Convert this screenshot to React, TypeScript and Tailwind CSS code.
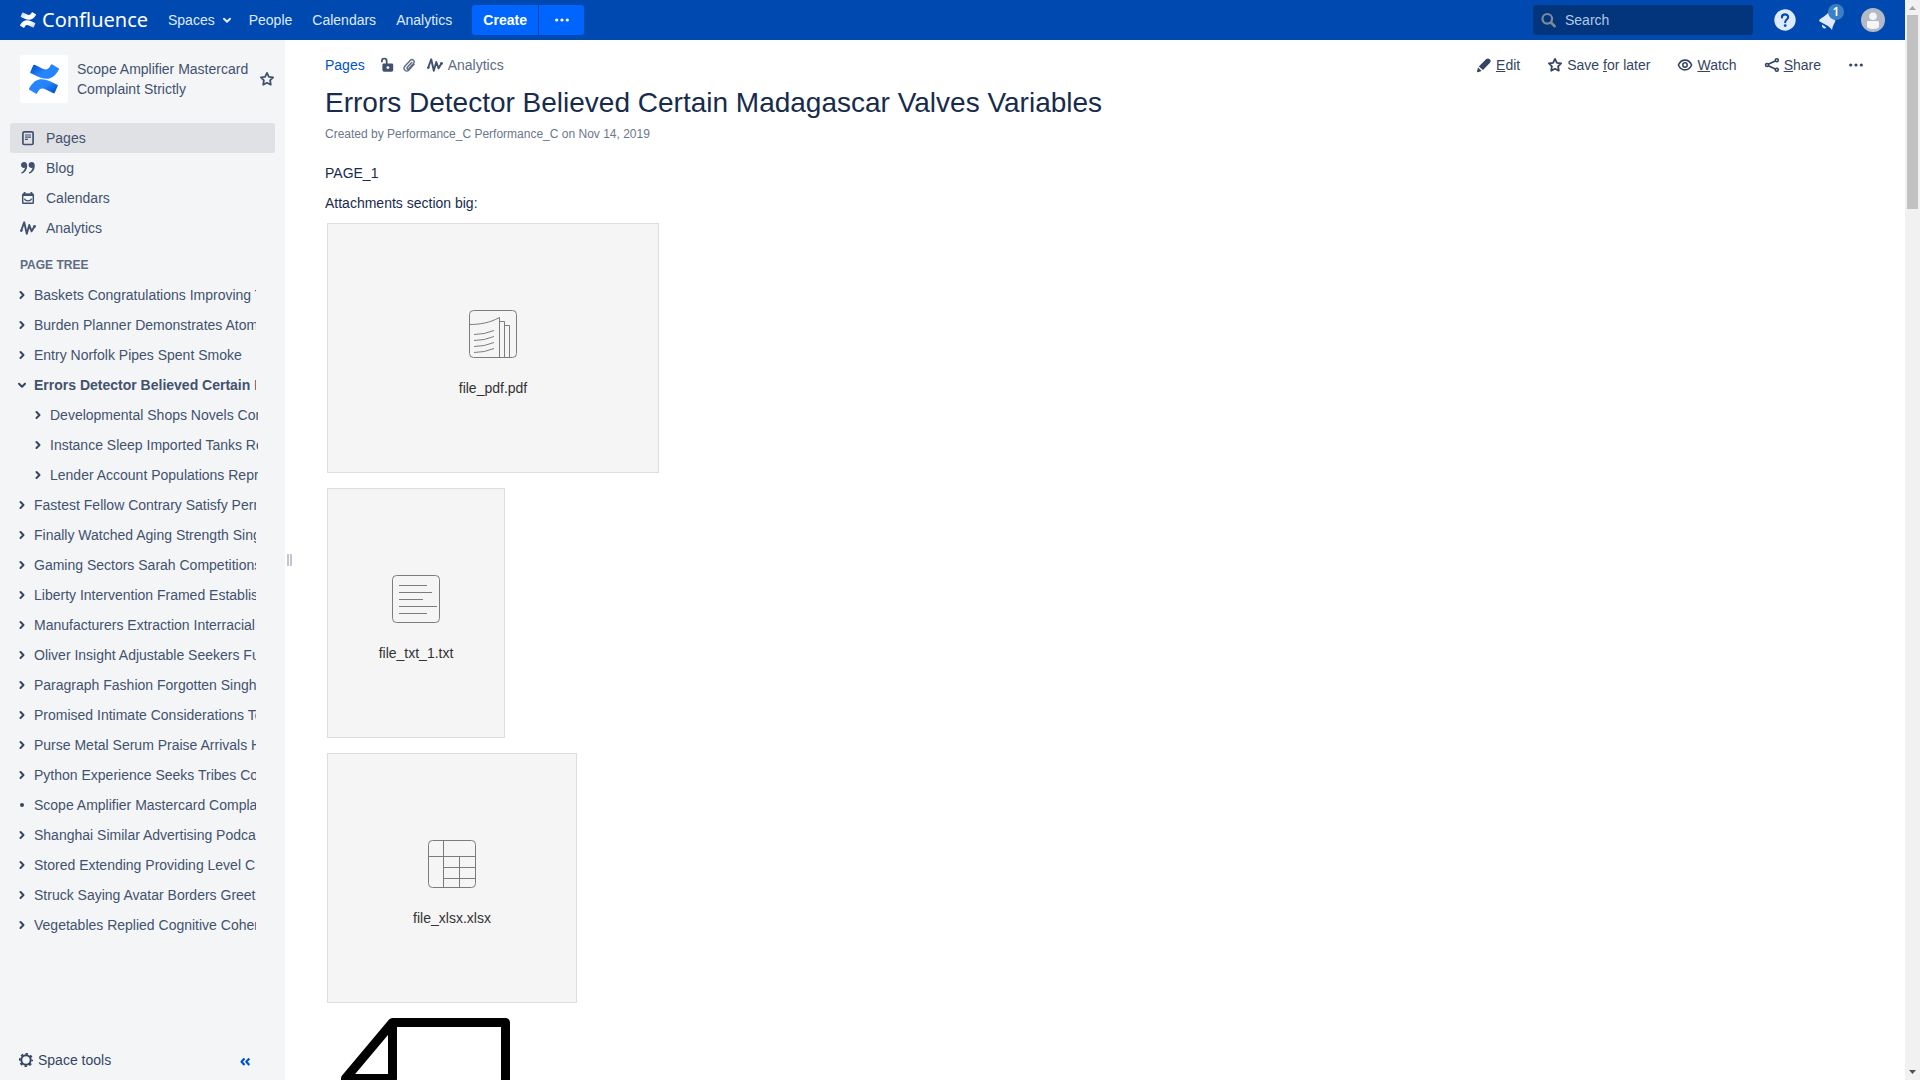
import type { ReactNode } from "react";

type IconProps = { className?: string };

function Svg({ children, className = "size-4" }: { children: ReactNode; className?: string }) {
  return (
    <svg viewBox="0 0 16 16" className={`${className} shrink-0`} fill="none" stroke="currentColor" aria-hidden="true">
      {children}
    </svg>
  );
}

const MARK_BOTTOM =
  "M.87 18.257c-.248.382-.53.875-.763 1.245a.764.764 0 0 0 .255 1.04l4.965 3.054a.764.764 0 0 0 1.058-.26c.199-.332.454-.763.733-1.221 1.967-3.247 3.945-2.853 7.508-1.146l4.957 2.337a.764.764 0 0 0 1.028-.382l2.364-5.346a.764.764 0 0 0-.382-1 599.851 599.851 0 0 1-4.965-2.361C10.911 10.97 5.224 11.185.87 18.257z";
const MARK_TOP =
  "M23.131 5.743c.249-.405.531-.875.764-1.25a.764.764 0 0 0-.256-1.034L18.675.404a.764.764 0 0 0-1.058.26c-.195.335-.451.763-.734 1.225-1.966 3.246-3.945 2.85-7.508 1.146L4.437.694a.764.764 0 0 0-1.027.382L1.046 6.422a.764.764 0 0 0 .382 1c1.039.49 3.105 1.467 4.965 2.361 6.698 3.246 12.392 3.029 16.738-4.04z";

function ConfluenceMark({ id, dark, light, className }: { id: string; dark: string; light: string; className: string }) {
  return (
    <svg viewBox="0 0 24 24" className={`${className} shrink-0`} aria-hidden="true">
      <defs>
        <linearGradient id={`${id}-b`} x1="1" y1="1" x2="0.2" y2="0.4">
          <stop offset="0.1" stopColor={dark} />
          <stop offset="0.7" stopColor={light} />
        </linearGradient>
        <linearGradient id={`${id}-t`} x1="0" y1="0" x2="0.8" y2="0.6">
          <stop offset="0.1" stopColor={dark} />
          <stop offset="0.7" stopColor={light} />
        </linearGradient>
      </defs>
      <path d={MARK_BOTTOM} fill={`url(#${id}-b)`} />
      <path d={MARK_TOP} fill={`url(#${id}-t)`} />
    </svg>
  );
}

function StarIcon({ className }: IconProps) {
  return (
    <Svg className={className}>
      <path d="M8 1.9 9.9 5.8l4.2.6-3 3 .7 4.3L8 11.7l-3.8 2 .7-4.3-3-3 4.2-.6z" strokeWidth="1.8" strokeLinejoin="round" />
    </Svg>
  );
}

function PageIcon() {
  return (
    <Svg>
      <rect x="2.9" y="1.9" width="10.2" height="12.6" rx="1.2" strokeWidth="1.7" />
      <path d="M5 5h6M5 7.2h6M5 9.4h3" strokeWidth="1.2" />
    </Svg>
  );
}

function QuoteIcon() {
  return (
    <Svg>
      <g fill="currentColor" stroke="none">
        <path d="M4.2 2C2.300 2 1 3.300 1 5s1.200 2.900 2.900 2.900c.4 0 .7 0 1-.1-.3 2.100-1.700 3.700-3.700 4.800l.5 1.200C5.200 12.600 7.200 9.700 7.200 6 7.200 3.500 6.100 2 4.200 2z" />
        <path d="M11.800 2C9.900 2 8.600 3.300 8.600 5s1.200 2.900 2.900 2.900c.4 0 .7 0 1-.1-.3 2.100-1.700 3.700-3.700 4.800l.5 1.200c3.500-1.200 5.500-4.100 5.500-7.800 0-2.500-1.100-4-3-4z" />
      </g>
    </Svg>
  );
}

function CalendarIcon() {
  return (
    <Svg>
      <rect x="2.700" y="4.200" width="10.600" height="9" rx="0.8" strokeWidth="1.500" />
      <path d="M2.500 4.800h11" strokeWidth="2.400" />
      <path d="M4.600 2v2M11.400 2v2" strokeWidth="1.800" />
      <path d="M4.500 8.600c.6 2.900 6.400 2.900 7 0" strokeWidth="1.200" />
    </Svg>
  );
}

function AnalyticsIcon({ className }: IconProps) {
  return (
    <Svg className={className}>
      <path d="M1.200 10.800 4.200 2.300l2.600 11.400L9.300 5l2.300 6.300 2.800-4.700" strokeWidth="1.900" strokeLinejoin="round" strokeLinecap="round" />
      <circle cx="1.400" cy="10.600" r="1.200" fill="currentColor" stroke="none" />
      <circle cx="14.500" cy="6.500" r="1.400" fill="currentColor" stroke="none" />
    </Svg>
  );
}

function ChevronRight() {
  return (
    <Svg>
      <path d="m6.500 5 3 3-3 3" strokeWidth="2" strokeLinecap="round" strokeLinejoin="round" />
    </Svg>
  );
}

function ChevronDown() {
  return (
    <Svg>
      <path d="m5 6.800 3 3 3-3" strokeWidth="2" strokeLinecap="round" strokeLinejoin="round" />
    </Svg>
  );
}

function DotIcon() {
  return (
    <Svg>
      <circle cx="8" cy="8" r="2" fill="currentColor" stroke="none" />
    </Svg>
  );
}

function MoreIcon() {
  return (
    <Svg>
      <g fill="currentColor" stroke="none">
        <circle cx="2.700" cy="8" r="1.600" />
        <circle cx="8" cy="8" r="1.600" />
        <circle cx="13.300" cy="8" r="1.600" />
      </g>
    </Svg>
  );
}

function UnlockIcon() {
  return (
    <Svg>
      <path d="M2.900 5.200V3.900c0-3.200 4.800-3.200 4.800 0v3.500" strokeWidth="1.700" />
      <path d="M4.700 6.500h8.200a1.300 1.300 0 0 1 1.300 1.300v5.300a1.700 1.700 0 0 1-1.700 1.700H5.100a1.700 1.700 0 0 1-1.700-1.700V7.800a1.300 1.300 0 0 1 1.300-1.300z" fill="currentColor" stroke="none" />
      <circle cx="8.900" cy="10.600" r="1.400" fill="#fff" stroke="none" />
    </Svg>
  );
}

function ClipIcon() {
  return (
    <Svg>
      <path
        d="M10.700 5.500 6.300 10.300c-1.100 1.200.5 2.500 1.500 1.400l4.700-5.300c2-2.400-1.200-5.200-3.300-3L3.800 9.300c-2.500 2.900 1.500 6.500 4.100 3.700l5.200-5.800"
        strokeWidth="1.400"
        strokeLinecap="round"
        strokeLinejoin="round"
      />
    </Svg>
  );
}

function PencilIcon() {
  return (
    <Svg>
      <g fill="currentColor" stroke="none">
        <path d="M10.300 2.100c.9-.9 2.300-.9 3.200 0l.5.500c.9.900.9 2.200 0 3.100l-7 7.200-4.200-3.500z" />
        <path d="M2.100 10.500 5.600 14l-3.700 1.200c-.6.100-1-.2-.9-.8z" />
      </g>
    </Svg>
  );
}

function EyeIcon() {
  return (
    <Svg>
      <path d="M1.400 8C3 4.400 5.400 3.100 8 3.100S13 4.400 14.600 8C13 11.600 10.600 12.900 8 12.900S3 11.600 1.400 8z" strokeWidth="1.600" strokeLinejoin="round" />
      <circle cx="8" cy="8" r="2.200" strokeWidth="1.500" />
    </Svg>
  );
}

function ShareIcon() {
  return (
    <Svg>
      <path d="M4.300 7.300 11.300 3.900M4.300 8.700l7 3.400" strokeWidth="1.700" />
      <circle cx="3" cy="8" r="1.500" strokeWidth="1.600" />
      <circle cx="12.800" cy="3.200" r="1.500" strokeWidth="1.600" />
      <circle cx="12.800" cy="12.800" r="1.500" strokeWidth="1.600" />
    </Svg>
  );
}

function GearIcon() {
  return (
    <Svg>
      <circle cx="8" cy="8" r="4.700" strokeWidth="2" />
      <circle cx="8" cy="8" r="6.200" strokeWidth="1.800" strokeDasharray="2.430 2.440" strokeDashoffset="1.200" />
    </Svg>
  );
}

function SearchIcon({ className }: IconProps) {
  return (
    <Svg className={className}>
      <circle cx="6.300" cy="6.800" r="4.800" strokeWidth="2.200" />
      <path d="m10 10.500 3.600 3.700" strokeWidth="2.600" strokeLinecap="round" />
    </Svg>
  );
}

function HelpIcon() {
  return (
    <svg viewBox="0 0 24 24" className="size-6" aria-hidden="true">
      <circle cx="12" cy="12" r="10.700" fill="#deebff" />
      <path d="M8.900 9.400c0-4 6.300-3.900 6.300-.3 0 2.300-3 2.500-3 5.100" fill="none" stroke="#0049b0" strokeWidth="2.100" strokeLinecap="round" />
      <circle cx="12.200" cy="17.600" r="1.400" fill="#0049b0" />
    </svg>
  );
}

function MegaphoneIcon() {
  return (
    <svg viewBox="0 0 24 24" className="size-6" fill="#deebff" aria-hidden="true">
      <path d="M2.600 11.600c2.500-2.400 6-3.600 9.400-7.600l6.500 9c-1.500 3-3 5-3.500 9-1.500-2.200-3-3-4.500-4.200L2.700 13.400c-.6-.5-.6-1.200-.1-1.800z" />
      <path d="M5 16.400l4.200 3.200c-1.300 2-4.800.4-4.200-3.200z" />
    </svg>
  );
}

function AvatarIcon() {
  return (
    <svg viewBox="0 0 24 24" className="size-6" aria-hidden="true">
      <circle cx="12" cy="12" r="12" fill="#b3bac5" />
      <circle cx="12" cy="8.300" r="3.800" fill="#f4f5f7" />
      <path d="M6 14.300c0-.8.500-1.300 1.300-1.300h9.400c.8 0 1.300.5 1.300 1.300v3.900c0 3.700-12 3.700-12 0z" fill="#f4f5f7" />
    </svg>
  );
}

function PdfFileIcon() {
  return (
    <g>
      <path d="M.5 14.500c10 0 20-1.500 30-7V47" />
      <path d="M30.500 11.500h5V47M35.500 15.500h5V47" />
      <path d="M5 24.500q10.500 0 20-4M5 30.500q10.500 0 20-4M5 36.500q10.500 0 20-4M5 42.500q10.500 0 20-4" />
    </g>
  );
}

function TxtFileIcon() {
  return <path d="M7 10.500h28M7 17.500h33M7 24.500h24M7 31.500h38M7 38.500h28" />;
}

function XlsFileIcon() {
  return <path d="M15.500.5v47M31.500 16.500v31M.5 16.500h47M15.500 27.500h32M15.500 38.500h32" />;
}

function FileCard({ name, width, children }: { name: string; width: string; children: ReactNode }) {
  return (
    <a
      href="#"
      className={`${width} mb-[15px] ml-0.5 flex h-[250px] max-w-full flex-col items-center border border-[#ddd] bg-[#f5f5f5] pt-[86px] text-[#333]`}
    >
      <svg viewBox="0 0 48 48" className="size-12" fill="none" stroke="#7c7c7c" aria-hidden="true">
        <rect x="0.500" y="0.500" width="47" height="47" rx="4" />
        {children}
      </svg>
      <span className="mt-5">{name}</span>
    </a>
  );
}

const navItems = [
  { label: "Pages", icon: <PageIcon />, active: true },
  { label: "Blog", icon: <QuoteIcon />, active: false },
  { label: "Calendars", icon: <CalendarIcon />, active: false },
  { label: "Analytics", icon: <AnalyticsIcon />, active: false },
];

type TreeNode = { title: string; kind?: "open" | "leaf"; children?: string[] };

const tree: TreeNode[] = [
  { title: "Baskets Congratulations Improving Tools" },
  { title: "Burden Planner Demonstrates Atomic" },
  { title: "Entry Norfolk Pipes Spent Smoke" },
  {
    title: "Errors Detector Believed Certain Madagascar Valves Variables",
    kind: "open",
    children: ["Developmental Shops Novels Contrary", "Instance Sleep Imported Tanks Refund", "Lender Account Populations Reprint"],
  },
  { title: "Fastest Fellow Contrary Satisfy Permits" },
  { title: "Finally Watched Aging Strength Singles" },
  { title: "Gaming Sectors Sarah Competitions" },
  { title: "Liberty Intervention Framed Establish" },
  { title: "Manufacturers Extraction Interracial" },
  { title: "Oliver Insight Adjustable Seekers Fund" },
  { title: "Paragraph Fashion Forgotten Singh" },
  { title: "Promised Intimate Considerations Tech" },
  { title: "Purse Metal Serum Praise Arrivals House" },
  { title: "Python Experience Seeks Tribes Copy" },
  { title: "Scope Amplifier Mastercard Complaint Strictly", kind: "leaf" },
  { title: "Shanghai Similar Advertising Podcast" },
  { title: "Stored Extending Providing Level C" },
  { title: "Struck Saying Avatar Borders Greeting" },
  { title: "Vegetables Replied Cognitive Coherent" },
];

function Header() {
  return (
    <header className="flex h-10 shrink-0 items-center bg-[#0049b0] text-[#deebff]">
      <a href="#" className="ml-5 flex items-center gap-1.5 text-white" aria-label="Confluence home">
        <ConfluenceMark id="logo" dark="#b9cdeb" light="#ffffff" className="size-4" />
        <span className="w-[106px] font-['Noto_Sans'] text-[20px] leading-6">Confluence</span>
      </a>
      <nav className="ml-5 flex items-center gap-5">
        <button className="flex items-center gap-1">
          Spaces
          <ChevronDown />
        </button>
        <a href="#" className="-ml-1.5">People</a>
        <a href="#">Calendars</a>
        <a href="#">Analytics</a>
      </nav>
      <div className="ml-5 flex h-[30px] gap-px font-bold text-white">
        <button className="w-[66px] rounded-l-[3px] bg-[#0065ff]">Create</button>
        <button className="flex w-[45px] items-center justify-center rounded-r-[3px] bg-[#0065ff]" aria-label="Create from template">
          <MoreIcon />
        </button>
      </div>
      <label className="ml-auto flex h-[30px] w-[220px] items-center gap-2 rounded-[3px] bg-[#03357c] pl-2">
        <SearchIcon className="size-4 text-[#7f8a9a]" />
        <input
          type="search"
          aria-label="Search"
          placeholder="Search"
          className="min-w-0 flex-1 bg-transparent outline-none placeholder:text-[#b3c8e8] placeholder:opacity-100"
        />
      </label>
      <button className="ml-5" aria-label="Help">
        <HelpIcon />
      </button>
      <button className="relative ml-5" aria-label="Notifications, 1 new">
        <MegaphoneIcon />
        <span className="absolute -top-1 left-[11px] flex size-4 items-center justify-center rounded-full bg-[#3b7fc4] font-['Noto_Sans'] text-[12px] leading-4 font-semibold text-white">
          1
        </span>
      </button>
      <button className="mr-5 ml-5" aria-label="User menu">
        <AvatarIcon />
      </button>
    </header>
  );
}

function Sidebar() {
  return (
    <aside className="flex w-[285px] shrink-0 flex-col bg-[#f4f5f7] text-[#42526e]">
      <div className="flex items-center px-2.5 pt-[15px]">
        <a href="#" className="ml-2.5 flex size-12 shrink-0 items-center justify-center rounded-[3px] bg-white" aria-label="Space home">
          <ConfluenceMark id="space" dark="#0052cc" light="#2684ff" className="size-[30px]" />
        </a>
        <a href="#" className="ml-[9px] w-[182px]">
          Scope Amplifier Mastercard Complaint Strictly
        </a>
        <button aria-label="Add to my spaces">
          <StarIcon />
        </button>
      </div>
      <nav className="mt-5 px-2.5">
        {navItems.map((item) => (
          <a
            key={item.label}
            href="#"
            className={`flex h-[30px] items-center gap-2.5 rounded-[3px] pl-2.5 ${item.active ? "bg-[#dfe1e5]" : ""}`}
          >
            {item.icon}
            {item.label}
          </a>
        ))}
      </nav>
      <h2 className="mt-3 pl-5 text-[12px] leading-5 font-bold text-[#5e6c84]">PAGE TREE</h2>
      <ul className="mt-[5px]">
        {tree.map((node) => (
          <li key={node.title}>
            <div className="flex h-[30px] items-center gap-1 pl-3.5">
              <button aria-label={`Toggle ${node.title}`} className="text-[#344563]">
                {node.kind === "open" ? <ChevronDown /> : node.kind === "leaf" ? <DotIcon /> : <ChevronRight />}
              </button>
              <a href="#" className={`w-[222px] overflow-hidden whitespace-nowrap ${node.kind === "open" ? "font-bold" : ""}`}>
                {node.title}
              </a>
            </div>
            {node.children && (
              <ul>
                {node.children.map((child) => (
                  <li key={child} className="flex h-[30px] items-center gap-1 pl-[30px]">
                    <button aria-label={`Toggle ${child}`} className="text-[#344563]">
                      <ChevronRight />
                    </button>
                    <a href="#" className="w-52 overflow-hidden whitespace-nowrap">
                      {child}
                    </a>
                  </li>
                ))}
              </ul>
            )}
          </li>
        ))}
      </ul>
      <div className="mt-auto flex items-center justify-between pr-8 pb-2.5 pl-[18px] text-[#344563]">
        <button className="flex items-center gap-1">
          <GearIcon />
          Space tools
        </button>
        <button className="text-[#0052cc]" aria-label="Collapse sidebar">
          <Svg>
            <path d="M7.500 6.500 4.500 9.700l3 3.200M12.300 6.500 9.300 9.700l3 3.200" strokeWidth="2.200" strokeLinejoin="round" />
          </Svg>
        </button>
      </div>
    </aside>
  );
}

function Action({ icon, children }: { icon: ReactNode; children: ReactNode }) {
  return (
    <button className="flex items-center gap-1">
      {icon}
      <span>{children}</span>
    </button>
  );
}

function PageContent() {
  return (
    <main className="min-w-0 flex-1 overflow-hidden pt-2.5 pr-[41px] pl-8 text-[#172b4d]">
      <div className="flex h-[30px] items-center justify-between">
        <div className="flex items-center">
          <a href="#" className="text-[#0052cc]">Pages</a>
          <a href="#" className="ml-3.5 text-[#42526e]" aria-label="Unrestricted">
            <UnlockIcon />
          </a>
          <a href="#" className="ml-1.5 text-[#5e6c84]" aria-label="Attachments">
            <ClipIcon />
          </a>
          <a href="#" className="ml-2.5 flex items-center gap-[5px] text-[#5e6c84]">
            <AnalyticsIcon className="size-4 text-[#42526e]" />
            Analytics
          </a>
        </div>
        <div className="flex items-center gap-[27px] text-[#344563]">
          <Action icon={<PencilIcon />}><u>E</u>dit</Action>
          <Action icon={<StarIcon />}>Save <u>f</u>or later</Action>
          <Action icon={<EyeIcon />}><u>W</u>atch</Action>
          <Action icon={<ShareIcon />}><u>S</u>hare</Action>
          <button aria-label="More actions">
            <MoreIcon />
          </button>
        </div>
      </div>
      <h1 className="mt-[7px] text-[28px] leading-8">Errors Detector Believed Certain Madagascar Valves Variables</h1>
      <p className="mt-[5px] text-[12px] leading-5 text-[#6b778c]">
        Created by <a href="#">Performance_C Performance_C</a> on <a href="#">Nov 14, 2019</a>
      </p>
      <p className="mt-[19px]">PAGE_1</p>
      <p className="mt-2.5 mb-2.5">Attachments section big:</p>
      <FileCard name="file_pdf.pdf" width="w-[332px]"><PdfFileIcon /></FileCard>
      <FileCard name="file_txt_1.txt" width="w-[178px]"><TxtFileIcon /></FileCard>
      <FileCard name="file_xlsx.xlsx" width="w-[250px]"><XlsFileIcon /></FileCard>
      <svg viewBox="0 0 200 240" className="ml-0.5 h-60 w-[200px]" fill="none" stroke="#000" strokeWidth="9" strokeLinejoin="round" aria-hidden="true">
        <path d="M65.500 4.500h113v231h-160V60.500z" />
        <path d="M65.500 4.500v56h-47" />
      </svg>
    </main>
  );
}

function ScrollRail() {
  return (
    <div className="flex w-[15px] shrink-0 flex-col items-center bg-[#f1f1f1]" aria-hidden="true">
      <svg viewBox="0 0 15 15" className="size-[15px] shrink-0">
        <path d="M4 10h7L7.500 6z" fill="#a3a3a3" />
      </svg>
      <div className="h-[194px] w-[11px] bg-[#c1c1c1]" />
      <svg viewBox="0 0 15 15" className="mt-auto size-[15px] shrink-0">
        <path d="M4 5h7L7.500 9z" fill="#505050" />
      </svg>
    </div>
  );
}

export default function App() {
  return (
    <div className="flex h-screen bg-white font-['Liberation_Sans',sans-serif] text-[14px] leading-5">
      <div className="flex min-w-0 flex-1 flex-col">
        <Header />
        <div className="flex min-h-0 flex-1">
          <Sidebar />
          <div className="flex w-2 shrink-0 flex-col justify-center">
            <div className="mx-auto h-3 w-[5px] border-x-2 border-[#c1c7d0]" />
          </div>
          <PageContent />
        </div>
      </div>
      <ScrollRail />
    </div>
  );
}
